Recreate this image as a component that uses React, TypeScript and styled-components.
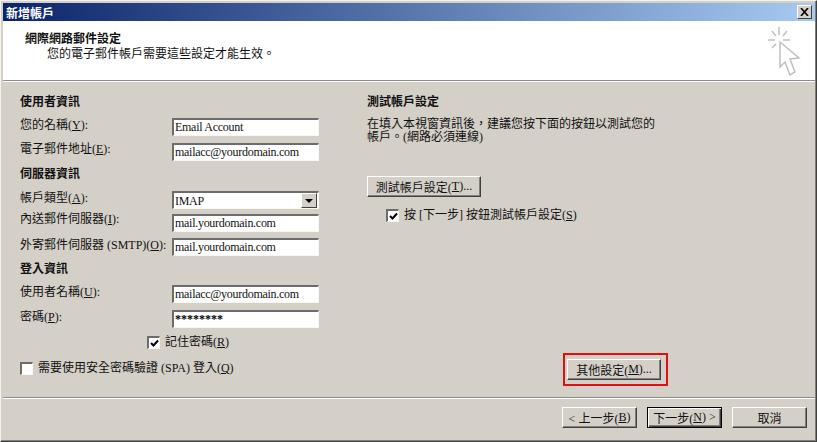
import * as React from "react";
import styled, { createGlobalStyle } from "styled-components";

const GlobalStyle = createGlobalStyle`
  html, body {
    margin: 0;
    padding: 0;
    background: #d4d0c8;
  }
  body {
    font-family: "Liberation Serif", "Noto Sans CJK TC", serif;
    font-size: 12px;
    color: #111;
  }
`;

const Dialog = styled.div`
  width: 817px;
  height: 442px;
  box-sizing: border-box;
  display: flex;
  flex-direction: column;
  background: #d4d0c8;
  padding: 2px 1px 0 2px;
  border-top: 1px solid #f4f2ee;
  border-left: 1px solid #f4f2ee;
  border-right: 1px solid #404040;
  border-bottom: 1px solid #404040;
  box-shadow: inset -1px -1px 0 #808080;
  overflow: hidden;
`;

const TitleBar = styled.div`
  height: 18px;
  flex: none;
  display: flex;
  align-items: center;
  justify-content: space-between;
  padding: 0 3px 0 3px;
  background: linear-gradient(90deg, #0a246a 0%, #a6caf0 100%);
`;

const TitleText = styled.span`
  color: #fff;
  font-weight: 700;
  font-size: 12px;
  font-family: "Noto Sans CJK TC", sans-serif;
`;

const CloseButton = styled.div`
  width: 15px;
  height: 14px;
  box-sizing: border-box;
  background: #d4d0c8;
  border-top: 1px solid #fff;
  border-left: 1px solid #fff;
  border-right: 1px solid #404040;
  border-bottom: 1px solid #404040;
  display: flex;
  align-items: center;
  justify-content: center;
`;

const Header = styled.div`
  height: 59px;
  flex: none;
  display: flex;
  justify-content: space-between;
  background: #fff;
  border-bottom: 1px solid #8c8c8c;
  padding-left: 22px;
`;

const HeaderText = styled.div`
  padding-top: 9px;
  font-family: "Noto Sans CJK TC", sans-serif;
`;

const HeaderTitle = styled.div`
  font-weight: 700;
  line-height: 16px;
`;

const HeaderSub = styled.div`
  line-height: 14px;
  padding-left: 22px;
`;

const Logo = styled.svg`
  margin: 5px 14px 0 0;
`;

const Body = styled.div`
  height: 317px;
  flex: none;
  display: flex;
  border-top: 1px solid #fff;
  border-bottom: 1px solid #8c8c8c;
  box-sizing: border-box;
`;

const LeftColumn = styled.div`
  width: 360px;
  padding: 9px 0 0 17px;
  box-sizing: border-box;
`;

const FormGrid = styled.div`
  display: grid;
  grid-template-columns: 152px 147px;
  grid-template-rows: 25px 25px 22px 26px 23px 24px 22px 25px 25px 24px;
  align-items: start;
`;

const SectionTitle = styled.div`
  grid-column: 1 / 3;
  margin-top: 2px;
  font-weight: 700;
  font-family: "Noto Sans CJK TC", sans-serif;
  line-height: 16px;
`;

const FieldLabel = styled.label<{ $drop?: number }>`
  white-space: nowrap;
  line-height: 15px;
  margin-top: ${(p) => p.$drop ?? 1}px;
`;

const InputBox = styled.div`
  height: 18px;
  margin-top: 2px;
  box-sizing: border-box;
  background: #fff;
  border-top: 2px solid #6c6c6c;
  border-left: 2px solid #6c6c6c;
  border-right: 1px solid #f8f7f4;
  border-bottom: 1px solid #f8f7f4;
  padding: 0 0 1px 1px;
  font-family: "Liberation Serif", serif;
  font-size: 12px;
  letter-spacing: -0.28px;
  line-height: 14px;
  display: flex;
  align-items: center;
  justify-content: space-between;
  overflow: hidden;
`;

const PasswordBox = styled(InputBox)`
  font-weight: 700;
  letter-spacing: 0;
  color: #000;
`;

const ComboBox = styled(InputBox)`
  padding-bottom: 0;
`;

const ComboArrow = styled.div`
  width: 16px;
  height: 15px;
  box-sizing: border-box;
  margin-right: 1px;
  background: #d4d0c8;
  border-top: 1px solid #fff;
  border-left: 1px solid #fff;
  border-right: 1px solid #404040;
  border-bottom: 1px solid #404040;
  display: flex;
  align-items: center;
  justify-content: center;
  &::after {
    content: "";
    border-left: 4px solid transparent;
    border-right: 4px solid transparent;
    border-top: 4px solid #000;
  }
`;

const CheckRow = styled.div<{ $indent: number; $top: number }>`
  display: flex;
  align-items: center;
  gap: 5px;
  margin-left: ${(p) => p.$indent}px;
  margin-top: ${(p) => p.$top}px;
  line-height: 15px;
  white-space: nowrap;
`;

const CheckBox = styled.div`
  width: 13px;
  height: 13px;
  flex: none;
  box-sizing: border-box;
  background: #fff;
  border-top: 2px solid #6c6c6c;
  border-left: 2px solid #6c6c6c;
  border-right: 1px solid #f8f7f4;
  border-bottom: 1px solid #f8f7f4;
  display: flex;
  align-items: center;
  justify-content: center;
`;

const RightColumn = styled.div`
  flex: 1;
  padding: 9px 0 0 4px;
  display: flex;
  flex-direction: column;
`;

const Description = styled.p`
  margin: 9px 0 0 0;
  line-height: 13px;
  width: 295px;
`;

const Button = styled.div<{ $default?: boolean }>`
  height: 21px;
  box-sizing: border-box;
  display: flex;
  align-items: center;
  justify-content: center;
  background: #d4d0c8;
  white-space: nowrap;
  border-top: 1px solid ${(p) => (p.$default ? "#000" : "#fff")};
  border-left: 1px solid ${(p) => (p.$default ? "#000" : "#fff")};
  border-right: 1px solid ${(p) => (p.$default ? "#000" : "#404040")};
  border-bottom: 1px solid ${(p) => (p.$default ? "#000" : "#404040")};
  box-shadow: ${(p) =>
    p.$default
      ? "inset 1px 1px 0 #fff, inset -1px -1px 0 #404040, inset -2px -2px 0 #808080"
      : "inset -1px -1px 0 #808080"};
`;

const TestButton = styled(Button)`
  width: 114px;
  margin-top: 32px;
`;

const MoreFrame = styled.div`
  margin-top: auto;
  margin-bottom: 11px;
  margin-left: 196px;
  width: 105px;
  height: 33px;
  box-sizing: border-box;
  border: 2px solid #e01010;
  padding-left: 2px;
  display: flex;
  align-items: center;
`;

const MoreButton = styled(Button)`
  width: 94px;
`;

const Footer = styled.div`
  flex: 1;
  display: flex;
  align-items: flex-start;
  justify-content: flex-end;
  gap: 10px;
  padding: 8px 8px 0 0;
  border-top: 1px solid #fff;
`;

const FooterButton = styled(Button)`
  width: 75px;
`;

const CheckMark = () => (
  <svg width="9" height="9" viewBox="0 0 9 9">
    <path d="M1 4 L3.5 6.5 L8 1.5" fill="none" stroke="#000" strokeWidth="2" />
  </svg>
);

export default function App() {
  return (
    <>
      <GlobalStyle />
      <Dialog>
        <TitleBar>
          <TitleText>新增帳戶</TitleText>
          <CloseButton>
            <svg width="9" height="8" viewBox="0 0 9 8">
              <path d="M1 0 L8 8 M8 0 L1 8" stroke="#000" strokeWidth="1.6" />
            </svg>
          </CloseButton>
        </TitleBar>
        <Header>
          <HeaderText>
            <HeaderTitle>網際網路郵件設定</HeaderTitle>
            <HeaderSub>您的電子郵件帳戶需要這些設定才能生效。</HeaderSub>
          </HeaderText>
          <Logo width="36" height="52" viewBox="0 0 36 52">
            <path
              d="M14 1 V9 M3 14 H10 M18 14 H25 M7 5 L11 10 M22 5 L18 10 M7 22 L11 18"
              stroke="#c0c0c0"
              strokeWidth="1.5"
              fill="none"
            />
            <path
              d="M15 16 L15 41 L20 36 L25 49 L30 46 L25 33 L34 32 Z"
              fill="#fff"
              stroke="#c0c0c0"
              strokeWidth="1.5"
            />
          </Logo>
        </Header>
        <Body>
          <LeftColumn>
            <FormGrid>
              <SectionTitle>使用者資訊</SectionTitle>
              <FieldLabel $drop={2}>您的名稱(<u>Y</u>):</FieldLabel>
              <InputBox>Email Account</InputBox>
              <FieldLabel>電子郵件地址(<u>E</u>):</FieldLabel>
              <InputBox>mailacc@yourdomain.com</InputBox>
              <SectionTitle>伺服器資訊</SectionTitle>
              <FieldLabel $drop={2}>帳戶類型(<u>A</u>):</FieldLabel>
              <ComboBox>IMAP<ComboArrow /></ComboBox>
              <FieldLabel $drop={0}>內送郵件伺服器(<u>I</u>):</FieldLabel>
              <InputBox>mail.yourdomain.com</InputBox>
              <FieldLabel $drop={2}>外寄郵件伺服器 (SMTP)(<u>O</u>):</FieldLabel>
              <InputBox>mail.yourdomain.com</InputBox>
              <SectionTitle>登入資訊</SectionTitle>
              <FieldLabel $drop={2}>使用者名稱(<u>U</u>):</FieldLabel>
              <InputBox>mailacc@yourdomain.com</InputBox>
              <FieldLabel $drop={2}>密碼(<u>P</u>):</FieldLabel>
              <PasswordBox>********</PasswordBox>
            </FormGrid>
            <CheckRow $indent={127} $top={3}>
              <CheckBox><CheckMark /></CheckBox>
              <span>記住密碼(<u>R</u>)</span>
            </CheckRow>
            <CheckRow $indent={0} $top={11}>
              <CheckBox />
              <span>需要使用安全密碼驗證 (SPA) 登入(<u>Q</u>)</span>
            </CheckRow>
          </LeftColumn>
          <RightColumn>
            <SectionTitle>測試帳戶設定</SectionTitle>
            <Description>在填入本視窗資訊後，建議您按下面的按鈕以測試您的帳戶。(網路必須連線)</Description>
            <TestButton>測試帳戶設定(<u>T</u>)...</TestButton>
            <CheckRow $indent={19} $top={11}>
              <CheckBox><CheckMark /></CheckBox>
              <span>按 [下一步] 按鈕測試帳戶設定(<u>S</u>)</span>
            </CheckRow>
            <MoreFrame>
              <MoreButton>其他設定(<u>M</u>)...</MoreButton>
            </MoreFrame>
          </RightColumn>
        </Body>
        <Footer>
          <FooterButton>&lt; 上一步(<u>B</u>)</FooterButton>
          <FooterButton $default>下一步(<u>N</u>) &gt;</FooterButton>
          <FooterButton>取消</FooterButton>
        </Footer>
      </Dialog>
    </>
  );
}
